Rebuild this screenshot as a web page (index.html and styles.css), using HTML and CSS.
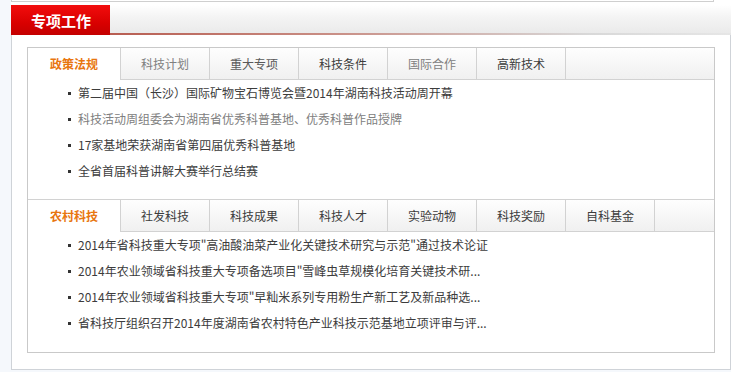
FILE: index.html
```html
<!DOCTYPE html>
<html lang="zh-CN">
<head>
  <meta charset="UTF-8" />
  <meta name="viewport" content="width=device-width, initial-scale=1.0" />
  <title>专项工作</title>
  <link rel="stylesheet" href="styles.css">
</head>
<body>
  <div class="wrap">
    <div class="prev-box"></div>

    <div class="hd">
      <h2 class="hd-title">专项工作</h2>
    </div>

    <div class="panel">
      <div class="inner">
        <ul class="tabs">
          <li class="on">政策法规</li>
          <li class="light">科技计划</li>
          <li class="mid">重大专项</li>
          <li>科技条件</li>
          <li class="light">国际合作</li>
          <li>高新技术</li>
        </ul>
        <ul class="news">
          <li>第二届中国（长沙）国际矿物宝石博览会暨2014年湖南科技活动周开幕</li>
          <li class="visited">科技活动周组委会为湖南省优秀科普基地、优秀科普作品授牌</li>
          <li>17家基地荣获湖南省第四届优秀科普基地</li>
          <li>全省首届科普讲解大赛举行总结赛</li>
        </ul>

        <ul class="tabs tabs-2">
          <li class="on">农村科技</li>
          <li>社发科技</li>
          <li>科技成果</li>
          <li>科技人才</li>
          <li>实验动物</li>
          <li>科技奖励</li>
          <li>自科基金</li>
        </ul>
        <ul class="news">
          <li>2014年省科技重大专项"高油酸油菜产业化关键技术研究与示范"通过技术论证</li>
          <li>2014年农业领域省科技重大专项备选项目"雪峰虫草规模化培育关键技术研...</li>
          <li>2014年农业领域省科技重大专项"早籼米系列专用粉生产新工艺及新品种选...</li>
          <li>省科技厅组织召开2014年度湖南省农村特色产业科技示范基地立项评审与评...</li>
        </ul>
      </div>
    </div>
  </div>
</body>
</html>
```

FILE: styles.css
```css
body {
  margin: 0;
  background: #f5f8fc;
  font-family: "Noto Sans CJK SC", "Liberation Sans", sans-serif;
  font-size: 12px;
  color: #3c3c3c;
}

.wrap {
  margin-left: 11px;
  width: 720px;
  background: #fff;
}

.prev-box {
  width: 701px;
  height: 1px;
  border: 1px solid #cfcfcf;
  border-top: 0;
  margin-bottom: 3px;
}

/* header bar */
.hd {
  height: 30px;
  background:
    linear-gradient(to right, #b0473a, #c98f86 45%, #d8d8d8 80%, #e6e6e6) left bottom / 100% 2px no-repeat,
    linear-gradient(#ffffff, #f4f4f4 40%, #e9e9e9);
}
.hd-title {
  margin: 0;
  width: 79px;
  height: 30px;
  padding-left: 20px;
  background: linear-gradient(#f20d0d, #d90000 60%, #c40000);
  color: #fff;
  font-size: 15px;
  font-weight: bold;
  line-height: 31px;
}

/* panel */
.panel {
  border: 1px solid #cfd3d8;
  border-top: 0;
  padding: 12px 15px 16px;
}
.inner {
  border: 1px solid #c9c9c9;
  background: #fff;
}

.tabs {
  display: flex;
  margin: 0;
  padding: 0;
  list-style: none;
  height: 31px;
  border-bottom: 1px solid #d2d2d2;
  background: linear-gradient(#fefefe, #f0f0f0);
}
.tabs li {
  width: 88px;
  border-right: 1px solid #d2d2d2;
  text-align: center;
  line-height: 31px;
  color: #3c3c3c;
}
.tabs li.light { color: #808080; }
.tabs li.mid { color: #595959; }
.tabs li.on {
  width: 92px;
  height: 32px;
  background: #fff;
  color: #e8760f;
  font-weight: bold;
}
.tabs-2 {
  border-top: 1px solid #d2d2d2;
}

.news {
  margin: 0;
  padding: 0 0 15px 40px;
  list-style: none;
}
.news li {
  line-height: 26px;
  height: 26px;
  white-space: nowrap;
}
.news li::before {
  content: "";
  display: inline-block;
  width: 3px;
  height: 3px;
  margin: 0 7px 3px 0;
  background: #333;
  vertical-align: middle;
}
.news li.visited { color: #808080; }
.tabs-2 + .news { padding-bottom: 16px; }
```
